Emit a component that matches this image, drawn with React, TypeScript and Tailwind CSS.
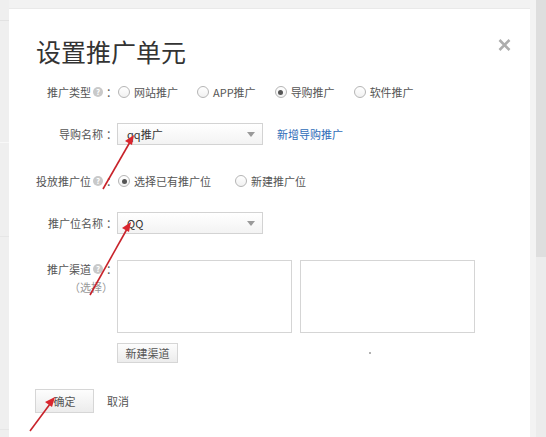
import React from "react";

const font = { fontFamily: '"Noto Sans CJK SC", "Noto Sans", sans-serif' };

const Help = () => (
  <span className="inline-flex shrink-0 items-center justify-center w-[10px] h-[10px] rounded-full bg-[#c9c9c9] text-white text-[8px] font-bold leading-none ml-[2px]">
    ?
  </span>
);

const Radio = ({ checked, label }: { checked?: boolean; label: string }) => (
  <label className="flex items-center gap-[4px] text-[11px] text-[#555] whitespace-nowrap">
    <span className="flex items-center justify-center w-[12px] h-[12px] rounded-full border border-[#b5b5b5] bg-gradient-to-b from-white to-[#f1f1f1]">
      {checked && <span className="w-[5px] h-[5px] rounded-full bg-[#555]" />}
    </span>
    <span>{label}</span>
  </label>
);

const Label = ({ text, help }: { text: string; help?: boolean }) => (
  <div className="w-[81px] shrink-0 flex items-center justify-end text-[11px] text-[#555] whitespace-nowrap">
    <span className="shrink-0">{text}</span>
    {help && <Help />}
    <span className="shrink-0 ml-[3px] w-[11px]">：</span>
  </div>
);

const Select = ({ value }: { value: string }) => (
  <div className="w-[146px] h-[22px] border border-[#d3d3d3] bg-gradient-to-b from-white to-[#f3f3f3] flex items-center justify-between pl-[9px] pr-[7px] text-[11px] text-[#333]">
    <span>{value}</span>
    <svg width="8" height="5" viewBox="0 0 8 5">
      <path d="M0 0 L8 0 L4 5 Z" fill="#9a9a9a" />
    </svg>
  </div>
);

const Btn = ({ children, className }: { children: React.ReactNode; className: string }) => (
  <button className={`border border-[#d6d6d6] bg-gradient-to-b from-[#fdfdfd] to-[#ececec] text-[11px] text-[#555] ${className}`}>
    {children}
  </button>
);

export default function App() {
  return (
    <div className="relative w-[546px] h-[437px] overflow-hidden bg-[#f1f1f1] flex" style={font}>
      {/* page behind the dialog */}
      <div className="w-[9px] shrink-0 flex flex-col bg-[#efefef]">
        <div className="h-[21px] border-b border-[#e2e2e2]" />
        <div className="h-[122px] border-b border-[#f8f8f8]" />
        <div className="h-[94px] border-b border-[#e6e6e6]" />
        <div className="h-[193px] border-b border-[#e6e6e6]" />
      </div>

      <div className="w-[521px] shrink-0 flex flex-col">
        <div className="h-[9px] bg-[#f2f2f2] border-b border-[#e9e9e9]" />
        <div className="flex-1 bg-white pl-[27px] pr-[19px] pt-[27px]">
          <div className="flex justify-between items-start">
            <h1 className="text-[25px] leading-[30px] text-[#333] font-normal">设置推广单元</h1>
            <button className="mt-[2px] w-[13px] h-[13px]">
              <svg width="13" height="12" viewBox="0 0 13 12">
                <path d="M1.5 1 L11.5 11 M11.5 1 L1.5 11" stroke="#adadad" strokeWidth="2.6" />
              </svg>
            </button>
          </div>

          <div className="flex items-center h-[20px] mt-[16px]">
            <Label text="推广类型" help />
            <div className="flex items-center gap-[19px] ml-[1px]">
              <Radio label="网站推广" />
              <Radio label="APP推广" />
              <Radio checked label="导购推广" />
              <Radio label="软件推广" />
            </div>
          </div>

          <div className="flex items-center h-[22px] mt-[21px]">
            <Label text="导购名称" />
            <Select value="qq推广" />
            <a className="ml-[14px] text-[11px] text-[#2e6cb8]">新增导购推广</a>
          </div>

          <div className="flex items-center h-[20px] mt-[26px]">
            <Label text="投放推广位" help />
            <div className="flex items-center gap-[24px] ml-[1px]">
              <Radio checked label="选择已有推广位" />
              <Radio label="新建推广位" />
            </div>
          </div>

          <div className="flex items-center h-[22px] mt-[21px]">
            <Label text="推广位名称" />
            <Select value="QQ" />
          </div>

          <div className="flex items-start mt-[26px]">
            <div className="w-[81px] shrink-0 flex flex-col items-end text-[11px] leading-[18px] whitespace-nowrap">
              <div className="flex items-center text-[#555]">
                <span>推广渠道</span>
                <Help />
                <span className="ml-[3px] w-[11px]">：</span>
              </div>
              <span className="text-[#999] mr-[4px]">（选择）</span>
            </div>
            <div className="flex gap-[8px]">
              <div className="w-[175px] h-[73px] border border-[#d5d5d5] bg-white" />
              <div className="w-[175px] h-[73px] border border-[#d5d5d5] bg-white" />
            </div>
          </div>

          <div className="flex items-center mt-[10px] pl-[81px]">
            <Btn className="w-[61px] h-[20px]">新建渠道</Btn>
            <span className="ml-[191px] w-[2px] h-[2px] rounded-full bg-[#999]" />
          </div>

          <div className="flex items-center mt-[26px] -ml-[1px]">
            <Btn className="w-[59px] h-[24px]">确定</Btn>
            <span className="ml-[13px] text-[11px] text-[#555]">取消</span>
          </div>
        </div>
      </div>

      <div className="flex-1 flex">
        <div className="w-[6px] bg-[#f3f3f3]" />
        <div className="flex-1 flex flex-col">
          <div className="h-[257px] bg-[#dedede]" />
          <div className="flex-1 bg-[#ececec]" />
        </div>
      </div>

      {/* annotation arrows drawn over the screenshot */}
      <svg className="absolute inset-0 pointer-events-none" width="546" height="437" viewBox="0 0 546 437">
        <g stroke="#c8232b" strokeWidth="1.6" fill="#d9262e">
          <line x1="103" y1="189" x2="130" y2="142" />
          <polygon points="134,135 125,141 132,145" stroke="none" />
          <line x1="90" y1="295" x2="127" y2="229" />
          <polygon points="131,222 122,228 129,232" stroke="none" />
          <line x1="30" y1="431" x2="50" y2="404" />
          <polygon points="55,397 45,402 52,407" stroke="none" />
        </g>
      </svg>
    </div>
  );
}
